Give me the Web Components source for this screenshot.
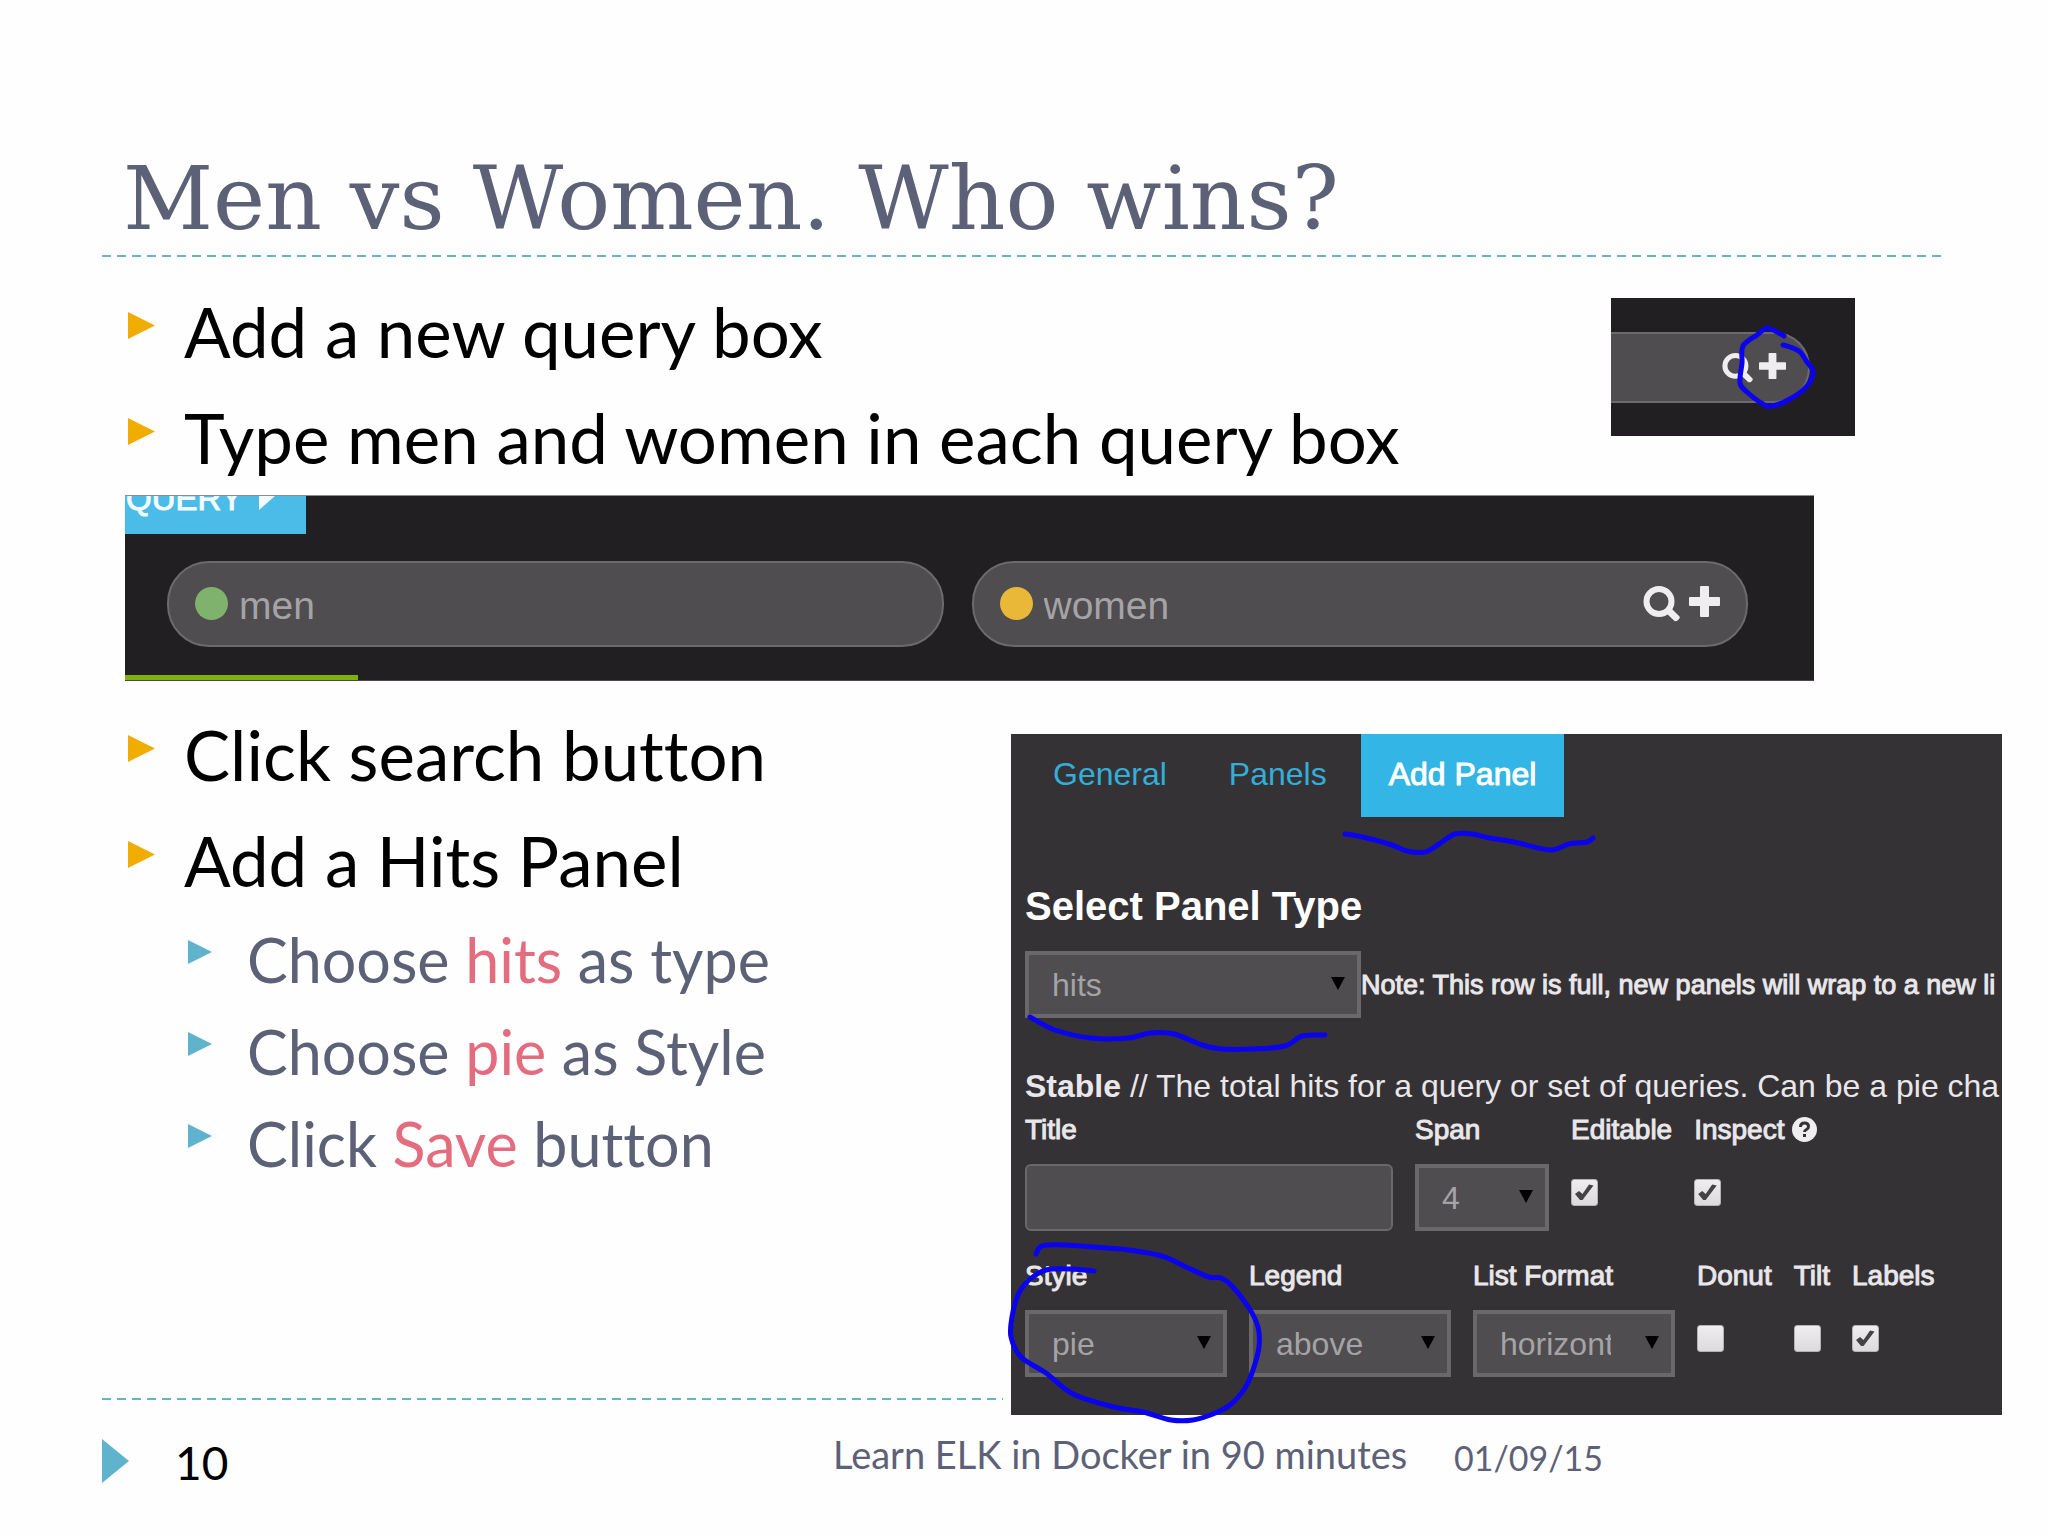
<!DOCTYPE html>
<html lang="en">
<head>
<meta charset="utf-8">
<title>Men vs Women. Who wins?</title>
<style>
  html, body { margin: 0; background: #fefefe; }
  body { min-height: 100vh; overflow-x: hidden; }
  em { font-style: normal; color: #e46c7f; }
</style>
</head>
<body>
<slide-deck-page>
  <span slot="title">Men vs Women. Who wins?</span>

  <bullet-list slot="intro">
    <bullet-item>Add a new query box</bullet-item>
    <bullet-item>Type men and women in each query box</bullet-item>
  </bullet-list>
  <query-thumb slot="thumb"></query-thumb>

  <query-strip slot="strip"></query-strip>

  <bullet-list slot="steps">
    <bullet-item>Click search button</bullet-item>
    <bullet-item>Add a Hits Panel</bullet-item>
    <bullet-item level="2">Choose <em>hits</em> as type</bullet-item>
    <bullet-item level="2">Choose <em>pie</em> as Style</bullet-item>
    <bullet-item level="2">Click <em>Save</em> button</bullet-item>
  </bullet-list>
  <panel-editor slot="panel"></panel-editor>

  <span slot="number">10</span>
  <span slot="footer">Learn ELK in Docker in 90 minutes</span>
  <span slot="date">01/09/15</span>
</slide-deck-page>

<script>
const define = (name, html, setup) => customElements.define(name, class extends HTMLElement {
  constructor() {
    super();
    this.attachShadow({ mode: 'open' });
  }
  connectedCallback() {
    this.shadowRoot.innerHTML = typeof html === 'function' ? html(this) : html;
    if (setup) setup(this);
  }
});

/* A dashed rule across its container */
define('dashed-rule', `
  <style>
    :host { display: block; height: 2px;
      background: repeating-linear-gradient(90deg, #66b5bf 0 9px, transparent 9px 15px); }
  </style>`);

/* Freehand pen stroke through a list of points */
define('ink-stroke', el => {
  const p = el.getAttribute('points').trim().split(/\s+/).map(s => s.split(',').map(Number));
  let d = `M${p[0]}`;
  for (let i = 0; i < p.length - 1; i++) {
    const a = p[i - 1] || p[i], b = p[i], c = p[i + 1], e = p[i + 2] || c;
    d += `C${b[0] + (c[0] - a[0]) / 6},${b[1] + (c[1] - a[1]) / 6} ${c[0] - (e[0] - b[0]) / 6},${c[1] - (e[1] - b[1]) / 6} ${c}`;
  }
  return `
  <style>
    :host { position: absolute; inset: 0; pointer-events: none; }
    svg { display: block; width: 100%; height: 100%; overflow: visible; }
    path { fill: none; stroke: #0b02ee; stroke-width: 5; stroke-linecap: round; stroke-linejoin: round; }
  </style>
  <svg aria-hidden="true"><path d="${d}"/></svg>`;
});

define('search-icon', `
  <style>:host { display: block; } svg { display: block; width: 100%; height: 100%; }</style>
  <svg viewBox="0 0 37 36" preserveAspectRatio="none" aria-hidden="true">
    <ellipse cx="16" cy="15.5" rx="12.5" ry="12.5" fill="none" stroke="#efedf0" stroke-width="6"/>
    <path d="M22 26l5-5 9.500 9.500c1 2-2 5.500-5 4.500z" fill="#efedf0"/>
  </svg>`);

define('plus-icon', `
  <style>:host { display: block; } svg { display: block; width: 100%; height: 100%; }</style>
  <svg viewBox="0 0 31 31" preserveAspectRatio="none" aria-hidden="true">
    <path d="M11 1q0-1 1-1h7q1 0 1 1v10h10q1 0 1 1v7q0 1-1 1H20v10q0 1-1 1h-7q-1 0-1-1V20H1q-1 0-1-1v-7q0-1 1-1h10z" fill="#efedf0"/>
  </svg>`);

define('bullet-list', `
  <style>:host { display: block; }</style>
  <div role="list"><slot></slot></div>`);

define('bullet-item', `
  <style>
    :host { display: flex; align-items: flex-start; color: #000; white-space: nowrap;
      font: 69px/106px Lato, sans-serif; font-variant-ligatures: none; }
    i { flex: none; width: 27px; height: 27px; margin: 33px 29px 0 0; background: #f0ac00;
      clip-path: polygon(0 0, 100% 50%, 0 100%); }
    :host([level="2"]) { padding-left: 60px; color: #5d6177; font-size: 61px; line-height: 92px; }
    :host([level="2"]) i { width: 24px; height: 24px; margin: 26px 35px 0 0; background: #5fb3cd; }
  </style>
  <i></i><span><slot></slot></span>`, el => el.setAttribute('role', 'listitem'));

/* Pill-shaped query box with a colour dot */
define('query-box', el => `
  <style>
    :host { display: flex; align-items: center; flex: 1; min-width: 0; box-sizing: border-box; height: 86px;
      padding: 0 26px; background: #4f4d4f; border: 2px solid #6b6a6c; border-radius: 42px; }
    i { flex: none; width: 33px; height: 33px; border-radius: 50%; margin-bottom: 2px; background: ${el.getAttribute('color')}; }
    input { flex: 1; min-width: 0; margin: 0; padding: 4px 0 0 11px; border: 0; outline: 0; background: none;
      color: #a5a3a5; font: 39px "Liberation Sans", Arial, sans-serif; }
    slot { display: flex; align-items: center; gap: 9px; }
  </style>
  <i></i><input aria-label="Query" value="${el.getAttribute('value')}"><slot></slot>`);

define('query-strip', `
  <style>
    :host { display: block; overflow: hidden; background: #221f22; box-sizing: border-box;
      border-top: 1px solid #8c8b8d; border-bottom: 1px solid #4a484b; }
    .tab { display: flex; align-items: flex-end; gap: 16px; width: 181px; height: 38px; margin: 0; overflow: hidden;
      box-sizing: border-box; padding: 0 0 17px 1px; border: 0; background: #4bbbe8; color: #f3fbff;
      font: 33px/36px "Liberation Sans", Arial, sans-serif; -webkit-text-stroke: 1px #f3fbff; }
    .tab svg { flex: none; width: 16px; height: 28px; margin-bottom: 7px; }
    .row { display: flex; gap: 28px; padding: 27px 66px 28px 42px; }
    .bar { width: 233px; height: 5px; background: #7fb10b; }
    button.icon { display: block; margin: 0; padding: 0; border: 0; background: none; }
    search-icon { width: 37px; height: 36px; }
    plus-icon { width: 31px; height: 31px; margin-bottom: 5px; }
  </style>
  <button class="tab">QUERY<svg viewBox="0 0 15 26" preserveAspectRatio="none" aria-hidden="true"><path d="M0 0L15 13L0 26z" fill="#f3fbff"/></svg></button>
  <div class="row">
    <query-box value="men" color="#7eb26d"></query-box>
    <query-box value="women" color="#eab839">
      <button class="icon" aria-label="Search"><search-icon></search-icon></button>
      <button class="icon" aria-label="Add query"><plus-icon></plus-icon></button>
    </query-box>
  </div>
  <div class="bar"></div>`);

define('query-thumb', `
  <style>
    :host { display: block; position: relative; box-sizing: border-box; width: 244px; height: 138px;
      padding: 34px 45px 33px 0; background: #221f22; }
    .pill { display: flex; align-items: center; gap: 6px; box-sizing: border-box; height: 71px; padding: 0 22px 0 0;
      background: #4f4d4f; border: 2px solid #6b6a6c; border-left: 0; border-radius: 0 35px 35px 0; }
    input { flex: 1; min-width: 0; border: 0; background: none; outline: 0; }
    button { margin: 0; padding: 0; border: 0; background: none; }
    search-icon { width: 31px; height: 30px; }
    plus-icon { width: 27px; height: 26px; margin-bottom: 4px; }
  </style>
  <div class="pill">
    <input aria-label="Query">
    <button aria-label="Search"><search-icon></search-icon></button>
    <button aria-label="Add query"><plus-icon></plus-icon></button>
  </div>
  <ink-stroke points="173,38 166,34 156,30 146,37 132,48 131,65 129,85 136,94 152,106 161,108 179,101 196,88 202,74 196,64 189,54 179,49 172,47"></ink-stroke>`);

/* Labelled control: type is text, select or check */
define('panel-field', el => {
  const type = el.getAttribute('type'), label = el.getAttribute('label'), value = el.getAttribute('value') || '';
  const control = {
    text: `<input id="c" type="text" value="${value}">`,
    select: `<select id="c"><option>${value}</option></select><svg viewBox="0 0 14 13" aria-hidden="true"><path d="M0 0H14L7 13z"/></svg>`,
    check: `<input id="c" type="checkbox" ${el.hasAttribute('checked') ? 'checked' : ''}>`
  }[type];
  const hidden = el.hasAttribute('bare');
  return `
  <style>
    :host { display: block; flex: none; color: #e9e7ea; font: 28px/32px "Liberation Sans", Arial, sans-serif; }
    .label { display: ${hidden ? 'none' : 'flex'}; gap: 8px; margin-bottom: 18px; white-space: nowrap; -webkit-text-stroke: 1px #e9e7ea; }
    .control { position: relative; height: 67px; }
    input[type=text], select { display: block; box-sizing: border-box; width: 100%; height: 67px; margin: 0;
      background: #4f4d4f; color: #a5a3a5; outline: 0; font: 32px "Liberation Sans", Arial, sans-serif; }
    input[type=text] { border: 2px solid #6a686b; border-radius: 6px; padding: 0 20px; }
    select { appearance: none; border: 4px solid #6a686b; border-radius: 0; padding: 0 60px 0 23px; text-overflow: clip; }
    .control svg { position: absolute; right: 16px; top: 26px; width: 14px; height: 13px; pointer-events: none; }
    input[type=checkbox] { appearance: none; display: block; box-sizing: border-box; width: 27px; height: 27px; margin: 0;
      border: 1px solid #b4b2b5; border-radius: 3px; background: linear-gradient(#eeedef, #dcdadd); }
    input[type=checkbox]:checked::before { content: ""; display: block; width: 25px; height: 25px; background: #454346;
      clip-path: polygon(12% 56%, 28% 44%, 42% 56%, 68% 18%, 86% 22%, 42% 80%, 32% 80%); }
    .check { padding-top: 15px; box-sizing: border-box; }
  </style>
  <div class="label"><label for="c">${label}</label><slot></slot></div>
  <div class="control ${type}">${control}</div>`;
}, el => { if (el.hasAttribute('bare')) el.shadowRoot.getElementById('c').setAttribute('aria-label', el.getAttribute('label')); });

define('help-badge', `
  <style>
    :host { display: block; width: 25px; height: 25px; margin-top: 3px; }
    svg { display: block; width: 100%; height: 100%; }
  </style>
  <svg viewBox="0 0 25 25" role="img" aria-label="Help">
    <circle cx="12.500" cy="12.500" r="12.500" fill="#efedf0"/>
    <path d="M8.500 10q0-4 4-4t4 3.500q0 2-2 3t-2 2.500" fill="none" stroke="#353235" stroke-width="3"/>
    <path d="M11 17h3v3h-3z" fill="#353235"/>
  </svg>`);

define('panel-editor', `
  <style>
    :host { display: block; position: relative; min-width: 0; color: #e9e7ea; font: 32px/36px "Liberation Sans", Arial, sans-serif; }
    .clip { overflow: hidden; background: #353235; padding: 0 0 38px 14px; white-space: nowrap; }
    nav { display: flex; gap: 6px; height: 83px; }
    nav a { padding: 22px 28px 25px; color: #33aed8; text-decoration: none; }
    nav a.on { background: #33b5e5; color: #fff; -webkit-text-stroke: 1px #fff; }
    h2 { margin: 65px 0 21px; font-size: 40px; line-height: 48px; color: #fff; }
    .row { display: flex; gap: 22px; }
    .type { gap: 0; align-items: center; }
    .type p { margin: 0; font-size: 27px; -webkit-text-stroke: 1px #e9e7ea; }
    .about { margin: 50px 0 10px; }
    .below { margin-top: 29px; }
    .w-type { width: 336px; } .w-title { width: 368px; } .w-span { width: 134px; } .w-style { width: 202px; }
  </style>
  <div class="clip">
    <nav><a href="#general">General</a><a href="#panels">Panels</a><a class="on" href="#add">Add Panel</a></nav>
    <h2>Select Panel Type</h2>
    <div class="row type">
      <panel-field bare class="w-type" type="select" label="Panel type" value="hits"></panel-field>
      <p>Note: This row is full, new panels will wrap to a new li</p>
    </div>
    <p class="about"><b>Stable</b> // The total hits for a query or set of queries. Can be a pie cha</p>
    <div class="row">
      <panel-field class="w-title" type="text" label="Title"></panel-field>
      <panel-field class="w-span" type="select" label="Span" value="4"></panel-field>
      <panel-field type="check" label="Editable" checked></panel-field>
      <panel-field type="check" label="Inspect" checked><help-badge></help-badge></panel-field>
    </div>
    <div class="row below">
      <panel-field class="w-style" type="select" label="Style" value="pie"></panel-field>
      <panel-field class="w-style" type="select" label="Legend" value="above"></panel-field>
      <panel-field class="w-style" type="select" label="List Format" value="horizontal"></panel-field>
      <panel-field type="check" label="Donut"></panel-field>
      <panel-field type="check" label="Tilt"></panel-field>
      <panel-field type="check" label="Labels" checked></panel-field>
    </div>
  </div>
  <ink-stroke points="334,100 347,102 378,110 396,117 414,118 428,110 444,100 461,100 479,104 503,108 539,116 558,110 576,108 582,104"></ink-stroke>
  <ink-stroke points="19,283 44,296 80,304 118,304 139,299 163,300 191,311 210,315 242,315 274,312 291,302 314,301"></ink-stroke>
  <ink-stroke points="25,520 31,512 53,511 96,514 118,516 151,522 175,533 198,543 210,544 221,552 238,574 247,593 248,613 242,636 234,654 219,671 202,680 182,686 160,686 132,678 103,673 62,660 35,639 10,623 0,603 1,583 7,561 18,546 35,536 60,535 83,537"></ink-stroke>`);

define('slide-deck-page', `
  <style>
    :host { display: block; padding-left: 102px; }
    h1 { margin: 0; padding: 143px 0 1px 21px; color: #5d6177; white-space: nowrap;
      font: 88px/111px "DejaVu Serif", serif; font-weight: 400; }
    .top { margin-right: 102px; }
    .intro { display: flex; justify-content: space-between; padding: 22px 193px 4px 26px; }
    ::slotted([slot=thumb]) { margin-top: 19px; }
    .strip { padding: 0 234px 0 23px; }
    .body { display: grid; grid-template-columns: minmax(0, 909fr) minmax(0, 991fr); padding-right: 46px; }
    .left { display: flex; flex-direction: column; justify-content: space-between; padding: 21px 0 15px; min-width: 0; }
    .left div { padding-left: 26px; }
    .left dashed-rule { margin-right: 8px; }
    ::slotted([slot=panel]) { margin-top: 53px; }
    footer { display: grid; grid-template-columns: 731fr 621fr 594fr; color: #5d6177; white-space: nowrap;
      padding: 15px 0 49px; font: 38px/48px Lato, sans-serif; }
    .num { display: flex; gap: 46px; padding-top: 9px; color: #000; font-size: 46px; }
    .num i { width: 27px; height: 44px; background: #5fb3cd; clip-path: polygon(0 0, 100% 50%, 0 100%); }
    .date { padding-top: 4px; font-size: 34px; }
  </style>
  <header><h1><slot name="title"></slot></h1><dashed-rule class="top"></dashed-rule></header>
  <section class="intro"><slot name="intro"></slot><slot name="thumb"></slot></section>
  <section class="strip"><slot name="strip"></slot></section>
  <section class="body">
    <div class="left"><div><slot name="steps"></slot></div><dashed-rule></dashed-rule></div>
    <slot name="panel"></slot>
  </section>
  <footer>
    <div class="num"><i></i><slot name="number"></slot></div>
    <div><slot name="footer"></slot></div>
    <div class="date"><slot name="date"></slot></div>
  </footer>`);
</script>
</body>
</html>
